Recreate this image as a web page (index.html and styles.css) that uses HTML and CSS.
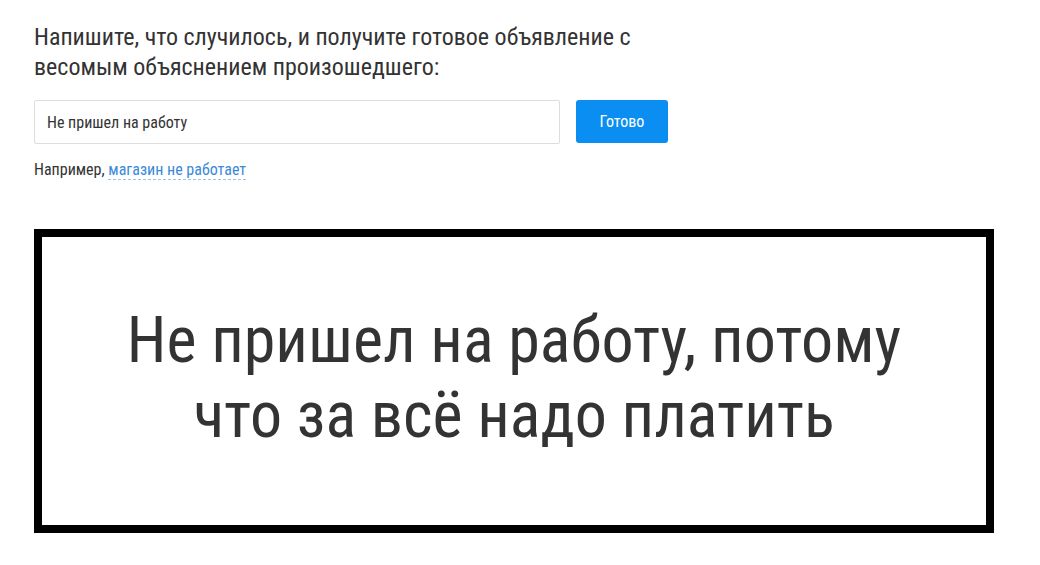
FILE: index.html
```html
<!DOCTYPE html>
<html lang="ru">
<head>
  <meta charset="UTF-8" />
  <meta name="viewport" content="width=device-width, initial-scale=1.0" />
  <title>Объявление</title>
  <link rel="stylesheet" href="styles.css">
</head>
<body>
  <div class="page">
    <div class="lead">Напишите, что случилось, и получите готовое объявление с<br>весомым объяснением произошедшего:</div>
    <form class="ask">
      <input class="field" type="text" value="Не пришел на работу">
      <button type="button" class="btn">Готово</button>
    </form>
    <div class="hint">Например, <a href="#" class="sample">магазин не работает</a></div>
    <div class="notice">
      <div class="notice-text">Не пришел на работу, потому<br>что за всё надо платить</div>
    </div>
  </div>
</body>
</html>
```

FILE: styles.css
```css
:root {
  --text: #333;
  --blue: #0a8ef2;
  --link: #3a8ad8;
}
* { box-sizing: border-box; }
html, body {
  margin: 0; padding: 0;
  background: #fff;
  font-family: "Roboto Condensed", Roboto, "Liberation Sans", sans-serif;
  color: var(--text);
}
.page {
  padding: 22px 34px 0;
  width: 994px;
}
.lead {
  font-size: 24px; line-height: 30px;
}
.ask {
  display: flex; gap: 16px;
  margin: 18px 0 0;
}
.field {
  width: 526px; height: 44px;
  border: 1px solid #ddd; border-radius: 2px;
  padding: 0 12px;
  font: inherit; font-size: 16px; color: var(--text);
  outline: none;
}
.btn {
  width: 92px; height: 43px;
  border: none; border-radius: 3px;
  background: var(--blue); color: #fff;
  font: inherit; font-size: 16px;
  cursor: pointer;
}
.hint {
  font-size: 16px; margin-top: 16px;
}
.sample {
  color: var(--link); text-decoration: none;
  border-bottom: 1px dashed #9cc3ea;
}
.notice {
  margin-top: 50px;
  width: 960px; height: 304px;
  border: 8px solid #000;
  display: flex; align-items: center; justify-content: center;
}
.notice-text {
  font-size: 64px; line-height: 75px;
  text-align: center;
  color: #333;
  padding-bottom: 6px;
}
```
